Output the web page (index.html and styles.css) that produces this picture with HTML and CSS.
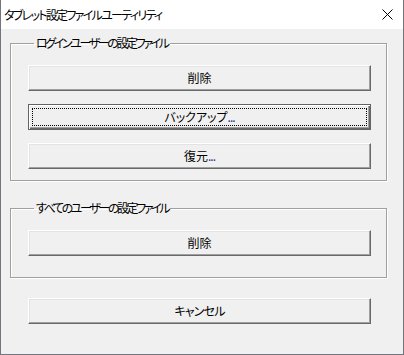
FILE: index.html
```html
<!DOCTYPE html>
<html>
<head>
 <meta charset="UTF-8">
 <title>タブレット設定ファイルユーティリティ</title>
 <link rel="stylesheet" href="styles.css">
</head>
<body>
<div class="dialog">
  <div class="titlebar">
    <span class="title">タブレット設定ファイルユーティリティ</span>
    <svg class="close" width="11" height="11" viewBox="0 0 11 11">
      <path d="M0.5 0.5 L10.5 10.5 M10.5 0.5 L0.5 10.5" stroke="#000" stroke-width="1" fill="none"/>
    </svg>
  </div>
  <div class="client">
    <fieldset class="group first">
      <legend>ログインユーザーの設定ファイル</legend>
      <button class="btn">削除</button>
      <button class="btn default"><span class="focus">バックアップ<span class="dots">...</span></span></button>
      <button class="btn">復元<span class="dots">...</span></button>
    </fieldset>
    <fieldset class="group second">
      <legend>すべてのユーザーの設定ファイル</legend>
      <button class="btn">削除</button>
    </fieldset>
    <button class="btn cancel">キャンセル</button>
  </div>
</div>
</body>
</html>
```

FILE: styles.css
```css
html, body { margin: 0; padding: 0; }
body { font-family: "Noto Sans CJK JP", "Noto Sans", sans-serif; font-size: 12px;
  color: #000; background: #f0f0f0; }
.dialog { width: 404px; height: 355px; box-sizing: border-box;
  border: 1px solid #74747c; border-top: 0; background: #f0f0f0;
  display: flex; flex-direction: column; }
.titlebar { height: 29px; background: #fff; display: flex; align-items: center;
  justify-content: space-between; padding: 0 10px 0 3px; }
.title { font-feature-settings: "palt"; line-height: 14px; letter-spacing: -1.7px; }
.close { display: block; }
.client { padding: 0 0 0 9px; display: flex; flex-direction: column; }
.group { width: 377px; box-sizing: border-box; margin: 7px 0 0 0;
  border: 1px solid #a0a0a0; padding: 15px 15px 11px 17px;
  box-shadow: inset 1px 1px 0 #fff, 1px 1px 0 #fff;
  display: flex; flex-direction: column; min-width: 0; }
.group legend { font-feature-settings: "palt"; line-height: 14px; padding: 0 2px;
  margin-left: 6px; letter-spacing: -2.4px; }
.group.second { margin-top: 20px; padding-bottom: 21px; }
.btn { width: 343px; height: 26px; box-sizing: border-box; padding: 0;
  font: inherit; font-feature-settings: "palt"; color: #000; background: #f0f0f0;
  border: 1px solid; border-color: #fff #696969 #696969 #fff;
  box-shadow: inset -1px -1px 0 #a0a0a0, inset 1px 1px 0 #e3e3e3;
  display: flex; align-items: center; justify-content: center; line-height: 14px; }
.btn + .btn { margin-top: 13px; }
.btn.default { border-color: #646464;
  box-shadow: inset 1px 1px 0 #fff, inset -1px -1px 0 #696969, inset -2px -2px 0 #a0a0a0;
  padding: 3px; }
.focus { flex: 1; align-self: stretch; border: 1px dotted #000;
  display: flex; align-items: center; justify-content: center; }
.dots { color: #1a3a8a; letter-spacing: -1px; }
.cancel { margin: 20px 0 0 18px; letter-spacing: -0.8px; }
```
